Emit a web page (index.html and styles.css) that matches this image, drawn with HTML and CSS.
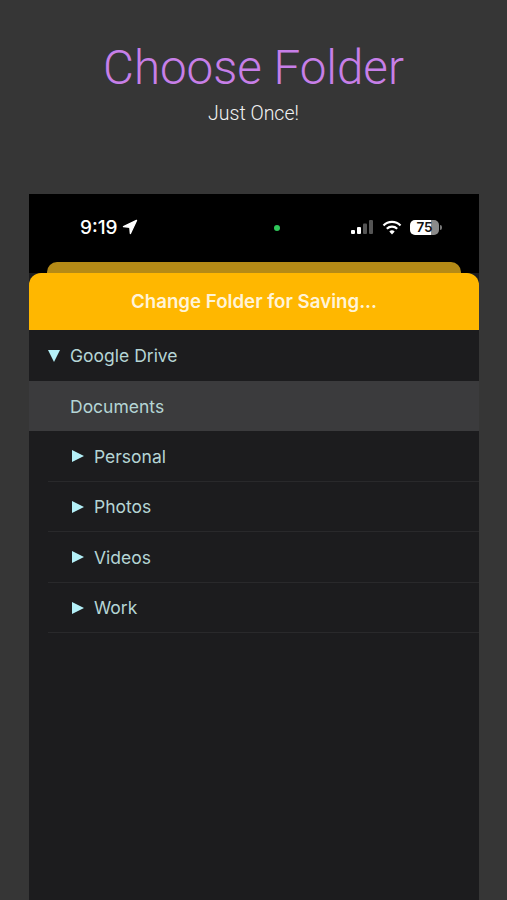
FILE: index.html
```html
<!DOCTYPE html>
<html lang="en">
<head>
<meta charset="utf-8">
<title>Choose Folder</title>
<link rel="stylesheet" href="styles.css">
</head>
<body>
<header class="hero">
  <h1 class="hero-title">Choose Folder</h1>
  <p class="hero-sub">Just Once!</p>
</header>
<main class="phone">
  <div class="status">
    <div class="status-left">
      <span class="time">9:19</span>
      <svg class="loc" viewBox="0 0 16 16"><path d="M14.500 1.500 L1.500 7.600 L7.800 8.200 L8.400 14.500 Z" fill="#fff" stroke="#fff" stroke-width="1.400" stroke-linejoin="round"/></svg>
    </div>
    <span class="dot"></span>
    <div class="status-right">
      <svg class="signal" viewBox="0 0 23 14"><rect x="0" y="10" width="4" height="4" rx="1" fill="#fff"/><rect x="6" y="7" width="4" height="7" rx="1" fill="#fff"/><rect x="12" y="3.500" width="4" height="10.500" rx="1" fill="#555"/><rect x="18" y="0" width="4" height="14" rx="1" fill="#555"/></svg>
      <svg class="wifi" viewBox="0 0 20 15"><path d="M1.500 5.500 A12 12 0 0 1 18.500 5.500" fill="none" stroke="#fff" stroke-width="2.200"/><path d="M4.800 8.700 A7.500 7.500 0 0 1 15.200 8.700" fill="none" stroke="#fff" stroke-width="2.200"/><path d="M10 14.500 L7.300 11.600 A3.800 3.800 0 0 1 12.700 11.600 Z" fill="#fff"/></svg>
      <div class="battery"><span class="battery-num">75</span></div>
      <span class="battery-cap"></span>
    </div>
  </div>
  <div class="sheet-back"></div>
  <div class="sheet-head">Change Folder for Saving...</div>
  <ul class="tree">
    <li class="row root"><span class="tri-down"></span><span>Google Drive</span></li>
    <li class="row selected"><span>Documents</span></li>
    <li class="row child"><span class="tri-right"></span><span>Personal</span></li>
    <li class="row child"><span class="tri-right"></span><span>Photos</span></li>
    <li class="row child"><span class="tri-right"></span><span>Videos</span></li>
    <li class="row child"><span class="tri-right"></span><span>Work</span></li>
  </ul>
</main>
</body>
</html>
```

FILE: styles.css
```css
* { box-sizing: border-box; }
html, body { margin: 0; height: 900px; overflow: hidden; }
body {
  background: #363636;
  font-family: "Inter", "Liberation Sans", sans-serif;
  display: flex;
  flex-direction: column;
}
.hero { height: 194px; padding-top: 38px; text-align: center; }
.hero-title {
  margin: 0;
  font-family: "Roboto", sans-serif;
  font-weight: 300;
  font-size: 47.500px;
  line-height: 60px;
  color: #c77fe8;
}
.hero-sub {
  margin: 2px 0 0;
  font-family: "Roboto", sans-serif;
  font-weight: 300;
  font-size: 19.500px;
  line-height: 28px;
  color: #f2f2f2;
}
.phone {
  margin: 0 28px 0 29px;
  flex: 1;
  background: #1c1c1e;
  display: flex;
  flex-direction: column;
  position: relative;
}
.status {
  height: 79px;
  background: #000;
  padding: 0 37px 13px 51px;
  display: flex;
  align-items: center;
  justify-content: space-between;
}
.status-left { display: flex; align-items: center; gap: 4px; }
.time { color: #fff; font-size: 19px; font-weight: 500; }
.loc { width: 16px; height: 16px; }
.dot { width: 6px; height: 6px; border-radius: 50%; background: #2fc75a; margin: 2px 0 0 65px; }
.status-right { display: flex; align-items: center; }
.signal { width: 23px; height: 14px; margin-right: 8px; }
.wifi { width: 20px; height: 15px; margin-right: 8px; }
.battery {
  width: 29px; height: 15px; border-radius: 5px;
  background: linear-gradient(90deg, #fff 0 74%, #8a8a8a 74%);
  display: flex; align-items: center; justify-content: center;
}
.battery-num { font-size: 13.500px; font-weight: 600; color: #111; line-height: 15px; }
.battery-cap { width: 2px; height: 5px; margin-left: 1px; background: #777; border-radius: 0 2px 2px 0; }
.sheet-back {
  position: absolute;
  left: 18px; right: 18px; top: 68px;
  height: 20px;
  background: #b58a16;
  border-radius: 10px 10px 0 0;
}
.sheet-head {
  position: relative;
  height: 57px;
  background: #ffb700;
  border-radius: 12px 12px 0 0;
  color: #fff4d8;
  font-size: 18.700px;
  font-weight: 600;
  display: flex;
  align-items: center;
  justify-content: center;
}
.tree { list-style: none; margin: 0; padding: 0; color: #b5d5d5; font-size: 17.500px; }
.row { height: 50.500px; padding-top: 1px; display: flex; align-items: center; }
.root { padding-left: 19px; gap: 10px; }
.selected { padding-left: 41px; background: #3b3b3d; }
.child { margin-left: 19px; padding-left: 24px; gap: 10px; border-bottom: 1px solid #29292b; }
.tri-down { width: 0; height: 0; border-left: 6px solid transparent; border-right: 6px solid transparent; border-top: 12px solid #b4f0f8; }
.tri-right { width: 0; height: 0; border-top: 6px solid transparent; border-bottom: 6px solid transparent; border-left: 12px solid #b4f0f8; }
```
